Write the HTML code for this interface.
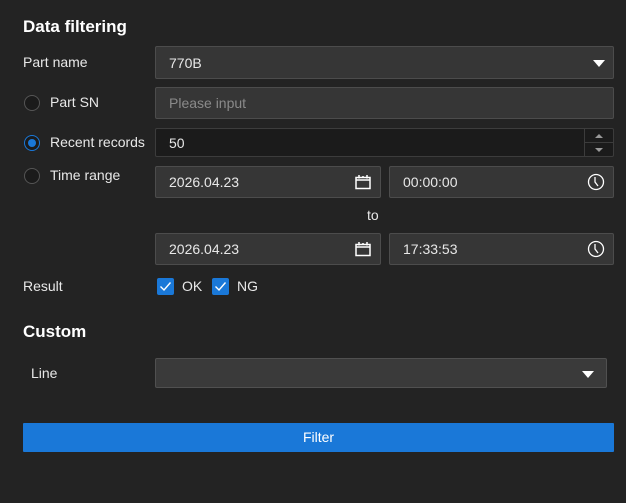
<!DOCTYPE html>
<html><head><meta charset="utf-8"><style>
body{margin:0;width:626px;height:503px;background:#232323;font-family:"Liberation Sans",sans-serif;color:#e8e8e8;position:relative;overflow:hidden;font-size:14px}
.a{position:absolute}
.h{font-weight:bold;font-size:17px;color:#fff}
.box{position:absolute;box-sizing:border-box;background:#363636;border:1px solid #4c4c4c;border-radius:2px;padding-left:13px;display:flex;align-items:center;font-size:14px}
.radio{position:absolute;width:16px;height:16px;border-radius:50%;border:1px solid #555;background:#1b1b1b;box-sizing:border-box}
.cb{position:absolute;width:17px;height:17px;background:#1a78d8;border-radius:2px}
</style></head><body>
<div class="a h" style="left:23px;top:17px">Data filtering</div>
<div class="a" style="left:23px;top:54px">Part name</div>
<div class="box" style="left:155px;top:46px;width:459px;height:33px">770B
<svg class="a" style="right:8px;top:13px" width="12" height="7"><path d="M0 0h12L6 7z" fill="#fff"/></svg></div>
<div class="radio" style="left:24px;top:95px"></div>
<div class="a" style="left:50px;top:94px">Part SN</div>
<div class="box" style="left:155px;top:87px;width:459px;height:32px;color:#8a8a8a">Please input</div>
<div class="radio" style="left:24px;top:135px;border-color:#1a78d8;background:#1b1b1b"><div class="a" style="left:3px;top:3px;width:8px;height:8px;border-radius:50%;background:#1a78d8"></div></div>
<div class="a" style="left:50px;top:134px">Recent records</div>
<div class="box" style="left:155px;top:128px;width:459px;height:29px;background:#1b1b1b;border-color:#3c3c3c">50
<div class="a" style="right:0;top:0;width:28px;height:27px;border-left:1px solid #3c3c3c">
<div style="height:13px;border-bottom:1px solid #3c3c3c;position:relative"><svg class="a" style="left:10px;top:5px" width="8" height="4"><path d="M4 0L8 4H0z" fill="#999"/></svg></div>
<svg class="a" style="left:10px;top:19px" width="8" height="4"><path d="M0 0h8L4 4z" fill="#999"/></svg></div></div>
<div class="radio" style="left:24px;top:168px"></div>
<div class="a" style="left:50px;top:167px">Time range</div>
<div class="box" style="left:155px;top:166px;width:226px;height:32px">2026.04.23<svg class="a" style="right:9px;top:7px" width="16" height="16"><path d="M1 3.5h14v11H1zM1 6h14M4 1v3.5M12 1v3.5M8 2v2" stroke="#fff" fill="none" stroke-width="1.5"/></svg></div>
<div class="box" style="left:389px;top:166px;width:225px;height:32px">00:00:00<svg class="a" style="right:8px;top:6px" width="18" height="18"><circle cx="9" cy="9" r="7.5" stroke="#fff" fill="none" stroke-width="1.3"/><path d="M8 4v5l3 4" stroke="#fff" fill="none" stroke-width="1.3"/></svg></div>
<div class="a" style="left:367px;top:207px">to</div>
<div class="box" style="left:155px;top:233px;width:226px;height:32px">2026.04.23<svg class="a" style="right:9px;top:7px" width="16" height="16"><path d="M1 3.5h14v11H1zM1 6h14M4 1v3.5M12 1v3.5M8 2v2" stroke="#fff" fill="none" stroke-width="1.5"/></svg></div>
<div class="box" style="left:389px;top:233px;width:225px;height:32px">17:33:53<svg class="a" style="right:8px;top:6px" width="18" height="18"><circle cx="9" cy="9" r="7.5" stroke="#fff" fill="none" stroke-width="1.3"/><path d="M8 4v5l3 4" stroke="#fff" fill="none" stroke-width="1.3"/></svg></div>
<div class="a" style="left:23px;top:278px">Result</div>
<div class="cb" style="left:157px;top:278px"><svg width="17" height="17"><path d="M3.5 8.5l3.5 3.5 6.5-7.5" stroke="#fff" fill="none" stroke-width="1.4"/></svg></div>
<div class="a" style="left:182px;top:278px">OK</div>
<div class="cb" style="left:212px;top:278px"><svg width="17" height="17"><path d="M3.5 8.5l3.5 3.5 6.5-7.5" stroke="#fff" fill="none" stroke-width="1.4"/></svg></div>
<div class="a" style="left:237px;top:278px">NG</div>
<div class="a h" style="left:23px;top:322px">Custom</div>
<div class="a" style="left:31px;top:365px">Line</div>
<div class="box" style="left:155px;top:358px;width:452px;height:30px;background:#3a3a3a;border-color:#505050"><svg class="a" style="right:12px;top:12px" width="12" height="7"><path d="M0 0h12L6 7z" fill="#fff"/></svg></div>
<div class="a" style="left:23px;top:423px;width:591px;height:29px;background:#1a78d8;border-radius:1px;text-align:center;line-height:29px;color:#fff;font-size:14px">Filter</div>
</body></html>
